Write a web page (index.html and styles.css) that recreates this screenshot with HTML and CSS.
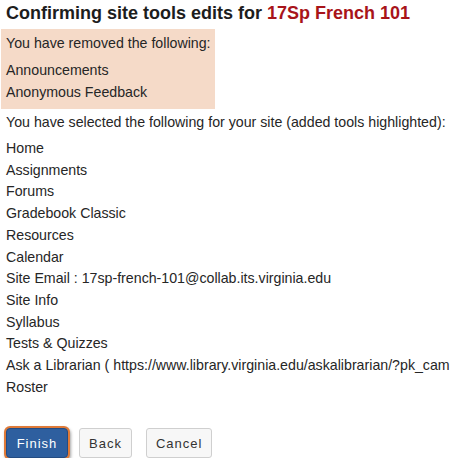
FILE: index.html
```html
<!DOCTYPE html>
<html>
<head>
<meta charset="utf-8">
<link rel="stylesheet" href="styles.css">
</head>
<body>
<div class="page">
  <h2 class="title">Confirming site tools edits for <span class="site">17Sp French 101</span></h2>
  <div class="removed">
    <p class="intro">You have removed the following:</p>
    <ul class="tools">
      <li>Announcements</li>
      <li>Anonymous Feedback</li>
    </ul>
  </div>
  <p class="selected">You have selected the following for your site (added tools highlighted):</p>
  <ul class="tools list">
    <li>Home</li>
    <li>Assignments</li>
    <li>Forums</li>
    <li>Gradebook Classic</li>
    <li>Resources</li>
    <li>Calendar</li>
    <li>Site Email : 17sp-french-101@collab.its.virginia.edu</li>
    <li>Site Info</li>
    <li>Syllabus</li>
    <li>Tests &amp; Quizzes</li>
    <li>Ask a Librarian ( https://www.library.virginia.edu/askalibrarian/?pk_campaign=collab )</li>
    <li>Roster</li>
  </ul>
  <div class="actions">
    <button class="btn primary">Finish</button>
    <button class="btn">Back</button>
    <button class="btn">Cancel</button>
  </div>
</div>
</body>
</html>
```
FILE: styles.css
```css
html, body {
  margin: 0;
  padding: 0;
  background: #fff;
  overflow: hidden;
}
body {
  font-family: "Liberation Sans", Arial, sans-serif;
  font-size: 14.2px;
  color: #262626;
  width: 450px;
}
.page {
  padding: 0 0 0 1px;
  white-space: nowrap;
}
.title {
  margin: 0;
  padding: 2px 0 0 5px;
  font-size: 18px;
  line-height: 22px;
  font-weight: bold;
  color: #1d1d1d;
  height: 27px;
}
.site {
  color: #a8141a;
}
.removed {
  background: #f5dac8;
  width: 209px;
  padding: 3px 0 6px 5px;
  margin-top: 0;
}
.intro, .selected {
  margin: 0;
  line-height: 22px;
}
.intro {
  margin-bottom: 5px;
}
.tools {
  list-style: none;
  margin: 0;
  padding: 0;
}
.tools li {
  line-height: 22px;
}
.selected {
  margin-top: 2px;
  padding-left: 5px;
  margin-bottom: 5px;
}
.list {
  padding-left: 5px;
}
.list li {
  line-height: 21.7px;
}
.actions {
  display: flex;
  align-items: center;
  margin-top: 30px;
  padding-left: 5px;
}
.btn {
  font-family: "Liberation Sans", Arial, sans-serif;
  font-size: 13px;
  letter-spacing: 1px;
  height: 30px;
  padding: 0 9px;
  border: 1px solid #cfcfcf;
  border-radius: 3px;
  background: #f7f7f7;
  color: #333;
  margin-right: 14px;
}
.btn.primary {
  background: #2e5f9f;
  color: #fff;
  border: 1px solid #244c82;
  width: 62px;
  border-radius: 4px;
  box-shadow: 0 0 0 2px #df7a38, 1px 2px 3px 2px rgba(0,0,0,0.35);
  margin-right: 11px;
}
```
